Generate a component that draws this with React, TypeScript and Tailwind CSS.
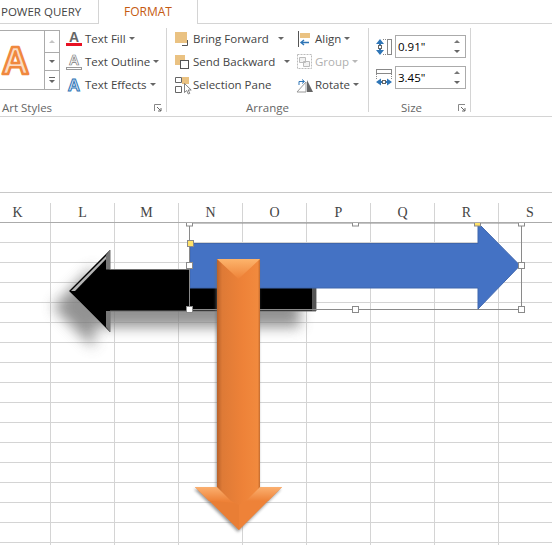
import type { ReactNode } from "react";

const COLUMNS = ["K", "L", "M", "N", "O", "P", "Q", "R", "S"];
const ROW_COUNT = 17;

function Caret({ muted = false }: { muted?: boolean }) {
	return (
		<svg width="6" height="3" viewBox="0 0 6 3" className="shrink-0">
			<path d="M0 0h6L3 3z" fill={muted ? "#b8b8b8" : "#666"} />
		</svg>
	);
}

function Launcher() {
	return (
		<svg width="8" height="8" viewBox="0 0 8 8" className="shrink-0">
			<path d="M.5 7V.5H7" fill="none" stroke="#888" />
			<path d="M3 3l4 4M7 4v3H4" fill="none" stroke="#666" />
		</svg>
	);
}

function RibbonItem({
	icon,
	label,
	caretGap,
	muted = false,
}: {
	icon: ReactNode;
	label: string;
	caretGap?: number;
	muted?: boolean;
}) {
	return (
		<div className="flex h-[23px] items-center">
			<div className="flex w-[19px] shrink-0 items-center">{icon}</div>
			<span className={muted ? "text-[#b0b0b0]" : "text-[#444]"}>{label}</span>
			{caretGap !== undefined && (
				<span className="flex" style={{ marginLeft: caretGap }}>
					<Caret muted={muted} />
				</span>
			)}
		</div>
	);
}

function Group({
	width,
	label,
	launcher = false,
	labelClass = "",
	children,
}: {
	width: string;
	label: string;
	launcher?: boolean;
	labelClass?: string;
	children: ReactNode;
}) {
	return (
		<div className={`flex h-[84px] shrink-0 flex-col border-r border-[#d4d4d4] ${width}`}>
			<div className="flex h-[77px]">{children}</div>
			<div className={`flex h-2 items-center leading-none text-[#666] ${labelClass}`}>
				<span>{label}</span>
				{launcher && (
					<span className="ml-auto flex pr-[4px]">
						<Launcher />
					</span>
				)}
			</div>
		</div>
	);
}

function Spinner({ value }: { value: string }) {
	return (
		<div className="flex h-[23px] w-[71px] items-center border border-[#ababab] bg-white pl-[2px] pr-[5px]">
			<span className="flex-1 text-black">{value}</span>
			<div className="flex flex-col gap-[7px]">
				<svg width="6" height="3" viewBox="0 0 6 3">
					<path d="M0 3h6L3 0z" fill="#777" />
				</svg>
				<Caret />
			</div>
		</div>
	);
}

function ArtStylesGallery() {
	return (
		<div className="mt-[2px] flex h-[60px] w-[60px] shrink-0 border-y border-r border-[#ababab]">
			<div className="flex flex-1 items-center">
				<svg width="32" height="36" viewBox="0 0 32 36" className="overflow-visible">
					<text
						x="15.500"
						y="32"
						textAnchor="middle"
						fontFamily="'Liberation Sans', sans-serif"
						fontWeight="700"
						fontSize="38"
						fill="#fbdcc4"
						stroke="#f0883e"
						strokeWidth="2.500"
						strokeLinejoin="round"
					>
						A
					</text>
				</svg>
			</div>
			<div className="flex w-[15px] flex-col border-l border-[#ababab]">
				<div className="flex h-[22px] items-center justify-center border-b border-[#ababab]">
					<svg width="6" height="3" viewBox="0 0 6 3">
						<path d="M0 3h6L3 0z" fill="#c4c4c4" />
					</svg>
				</div>
				<div className="flex h-[18px] items-center justify-center border-b border-[#ababab]">
					<Caret />
				</div>
				<div className="flex flex-1 flex-col items-center justify-center gap-[2px]">
					<div className="h-px w-[6px] bg-[#666]" />
					<Caret />
				</div>
			</div>
		</div>
	);
}

const textFillIcon = (
	<svg width="16" height="18" viewBox="0 0 16 18">
		<text x="8" y="12" textAnchor="middle" fontFamily="'Liberation Sans', sans-serif" fontWeight="700" fontSize="14" fill="#666">
			A
		</text>
		<rect x="0" y="13" width="16" height="3" fill="#e81123" />
	</svg>
);

const textOutlineIcon = (
	<svg width="16" height="18" viewBox="0 0 16 18">
		<text x="8" y="12" textAnchor="middle" fontFamily="'Liberation Sans', sans-serif" fontWeight="700" fontSize="14" fill="#fff" stroke="#777" strokeWidth=".7">
			A
		</text>
		<rect x=".5" y="14.500" width="15" height="2" fill="#fff" stroke="#999" />
	</svg>
);

const textEffectsIcon = (
	<svg width="16" height="18" viewBox="0 0 16 18">
		<text x="8" y="15" textAnchor="middle" fontFamily="'Liberation Sans', sans-serif" fontWeight="700" fontSize="17" fill="#dbe8f6" stroke="#2e75b6" strokeWidth="1">
			A
		</text>
	</svg>
);

const bringForwardIcon = (
	<svg width="16" height="16" viewBox="0 0 16 16">
		<rect x="1" y="1" width="12" height="11" fill="#eac282" />
		<path d="M13.500 9v5.500H8" fill="none" stroke="#555" />
	</svg>
);

const sendBackwardIcon = (
	<svg width="16" height="16" viewBox="0 0 16 16">
		<rect x="1" y="1" width="10" height="10" fill="#eac282" />
		<rect x="6.500" y="6.500" width="8" height="8" fill="#fff" stroke="#555" />
	</svg>
);

const selectionPaneIcon = (
	<svg width="18" height="20" viewBox="0 0 18 20">
		<path d="M1.500 2.500h6v5h-6zM1.500 11.500h6v6h-6z" fill="#fff" stroke="#666" />
		<rect x="8" y="2" width="7" height="7" fill="#eac282" />
		<path d="M10.500 8.500v9l2.200-2 1.600 3.500 1.500-.7-1.600-3.300h3z" fill="#fff" stroke="#666" strokeWidth=".8" />
	</svg>
);

const alignIcon = (
	<svg width="16" height="18" viewBox="0 0 16 18">
		<path d="M2.500 1v16" stroke="#555" />
		<rect x="4" y="3" width="10" height="5" fill="#eac282" />
		<path d="M13 12.500H5M8 10l-3 2.500L8 15" fill="none" stroke="#2e75b6" strokeWidth="1.400" />
	</svg>
);

const groupIcon = (
	<svg width="17" height="17" viewBox="0 0 17 17">
		<path d="M1.500 1.500h14v14h-14z" fill="none" stroke="#bbb" strokeDasharray="2 1" />
		<path d="M3.500 4.500h6v5h-6zM7.500 8.500h6v5h-6z" fill="#f2f2f2" stroke="#bbb" />
	</svg>
);

const rotateIcon = (
	<svg width="18" height="16" viewBox="0 0 18 16">
		<path d="M1 15L10 5v10z" fill="#fff" stroke="#999" />
		<path d="M11 3l6 12h-6z" fill="#666" />
		<path d="M3 8V4.500h5M6 2.500l2.500 2L6 6.500" fill="none" stroke="#2e75b6" />
	</svg>
);

const heightIcon = (
	<svg width="16" height="18" viewBox="0 0 16 18">
		<path d="M4 3v12" stroke="#2e75b6" strokeWidth="2" />
		<path d="M0 6l4-5 4 5zM0 12l4 5 4-5z" fill="#2e75b6" />
		<rect x="2.500" y="7.500" width="3" height="3" fill="#fff" stroke="#666" />
		<path d="M7 1.500h4" stroke="#888" strokeDasharray="1 1" />
		<path d="M7 16.500h4" stroke="#888" strokeDasharray="1 1" />
		<rect x="11.500" y="1.500" width="4" height="15" fill="#fff" stroke="#888" />
	</svg>
);

const widthIcon = (
	<svg width="17" height="18" viewBox="0 0 17 18">
		<rect x=".5" y=".5" width="15" height="4" fill="#fff" stroke="#888" />
		<path d="M.5 5v5M15.500 5v5" stroke="#888" strokeDasharray="1 1" />
		<path d="M3 13h10" stroke="#2e75b6" strokeWidth="2" />
		<path d="M5 9.500L0 13l5 3.500zM11 9.500l5 3.500-5 3.500z" fill="#2e75b6" />
		<rect x="6.500" y="11.500" width="3" height="3" fill="#fff" stroke="#666" />
	</svg>
);

function Ribbon() {
	return (
		<div className="font-['Open_Sans',sans-serif] text-[11.5px]">
			<div className="flex h-6 text-[#444]">
				<div className="flex w-[99px] items-center border-r border-b border-[#d4d4d4] pl-px">POWER QUERY</div>
				<div className="flex w-[99px] items-center justify-center border-r border-[#d4d4d4] text-[12px] text-[#c55a11]">FORMAT</div>
				<div className="flex-1 border-b border-[#d4d4d4]" />
			</div>
			<div className="flex h-[93px] items-start border-b border-[#d4d4d4] pt-1">
				<Group width="w-[167px]" label="Art Styles" launcher labelClass="pl-[2px]">
					<ArtStylesGallery />
					<div className="-mt-px pl-[6px]">
						<RibbonItem icon={textFillIcon} label="Text Fill" caretGap={3} />
						<RibbonItem icon={textOutlineIcon} label="Text Outline" caretGap={3} />
						<RibbonItem icon={textEffectsIcon} label="Text Effects" caretGap={3} />
					</div>
				</Group>
				<Group width="w-[202px]" label="Arrange" labelClass="justify-center">
					<div className="-mt-px w-[129px] pl-[7px]">
						<RibbonItem icon={bringForwardIcon} label="Bring Forward" caretGap={9} />
						<RibbonItem icon={sendBackwardIcon} label="Send Backward" caretGap={9} />
						<RibbonItem icon={selectionPaneIcon} label="Selection Pane" />
					</div>
					<div className="-mt-px">
						<RibbonItem icon={alignIcon} label="Align" caretGap={3} />
						<RibbonItem icon={groupIcon} label="Group" caretGap={3} muted />
						<RibbonItem icon={rotateIcon} label="Rotate" caretGap={3} />
					</div>
				</Group>
				<Group width="w-[102px]" label="Size" launcher labelClass="pl-[32px]">
					<div className="flex flex-col gap-2 pl-[7px] pt-[7px]">
						<div className="flex items-center gap-[3px]">
							{heightIcon}
							<Spinner value={'0.91"'} />
						</div>
						<div className="flex items-center gap-[2px]">
							{widthIcon}
							<Spinner value={'3.45"'} />
						</div>
					</div>
				</Group>
			</div>
		</div>
	);
}

function Handle({ x, y, yellow = false }: { x: number; y: number; yellow?: boolean }) {
	return <rect x={x - 3} y={y - 3} width="6" height="6" fill={yellow ? "#ffe26b" : "#fff"} stroke="#8a8a8a" />;
}

// page coordinates, hence the viewBox offset
function Shapes() {
	const black = "M69 291L110 250V269.500H316V311H110V332Z";
	const blue = "M190 243.500H478V223L520 265.500L478 309V288H190Z";
	const orange = "M217 259H260V487H282L239 530L195 487H217Z";
	return (
		<svg className="absolute inset-0 h-full w-full" viewBox="0 223 552 322">
			<defs>
				<filter id="soft" x="-20%" y="-40%" width="140%" height="180%">
					<feGaussianBlur stdDeviation="7" />
				</filter>
				<filter id="softOrange" x="-30%" y="-10%" width="160%" height="120%">
					<feGaussianBlur stdDeviation="1.500" />
				</filter>
				<linearGradient id="shaft" x1="0" x2="1" y1="0" y2="0">
					<stop offset="0" stopColor="#b9622a" />
					<stop offset=".12" stopColor="#de7a36" />
					<stop offset=".6" stopColor="#ee8238" />
					<stop offset=".95" stopColor="#f18a3e" />
					<stop offset="1" stopColor="#c06a2e" />
				</linearGradient>
				<linearGradient id="bevelTop" x1="0" x2="0" y1="0" y2="1">
					<stop offset="0" stopColor="#fdb46c" />
					<stop offset="1" stopColor="#ee8238" />
				</linearGradient>
				<linearGradient id="bevelHead" x1="0" x2="0" y1="0" y2="1">
					<stop offset="0" stopColor="#fbb070" />
					<stop offset="1" stopColor="#ee8238" />
				</linearGradient>
			</defs>

			<path d={black} fill="#777" opacity=".8" filter="url(#soft)" transform="translate(-16 16)" />
			<path d={black} fill="#000" stroke="#6e6e6e" strokeWidth="1" />
			<path d="M71 291L109 253V256L75 291Z" fill="#b5b5b5" />
			<path d="M110 250V269.500H106V255Z" fill="#777" />
			<path d="M110 332V311H106V327Z" fill="#777" />
			<path d="M312 270H316V311H312Z" fill="#555" />

			<path d={blue} fill="#4472c4" stroke="#3f66ad" strokeWidth="1" />

			<path d="M189.500 223H521.500V309.500H189.500Z" fill="none" stroke="#8a8a8a" />
			<Handle x={355.500} y={223} />
			<Handle x={189.500} y={223} />
			<Handle x={521.500} y={223} />
			<Handle x={477.500} y={223} yellow />
			<Handle x={190.500} y={243.500} yellow />
			<Handle x={189.500} y={265.500} />
			<Handle x={521.500} y={265.500} />
			<Handle x={189.500} y={309.500} />
			<Handle x={355.500} y={309.500} />
			<Handle x={521.500} y={309.500} />

			<path d={orange} fill="#6e6e6e" opacity=".7" filter="url(#softOrange)" transform="translate(-1 2)" />
			<path d="M195 487H282L239 530Z" fill="#ee8238" />
			<path d="M239 503V530L210 501Z" fill="#e97e35" />
			<path d="M195 487H218L232 501H209Z" fill="url(#bevelHead)" />
			<path d="M282 487H259L245 501H268Z" fill="url(#bevelHead)" />
			<path d="M217 259H260V487L246 501L239 505L231 501L217 487Z" fill="url(#shaft)" />
			<path d="M217 259H260L238.500 279Z" fill="url(#bevelTop)" />
		</svg>
	);
}

function Sheet() {
	return (
		<div className="border-t border-[#c8c8c8]">
			<div className="grid h-[30px] grid-cols-[51px_repeat(7,64px)_1fr] border-b border-[#ababab] font-['Liberation_Serif',serif] text-[14px] text-[#444]">
				{COLUMNS.map((name, i) => (
					<div key={name} className="flex items-end justify-center">
						<div className={`flex h-[19px] w-full items-center justify-center ${i < 8 ? "border-r border-[#d4d4d4]" : ""} ${i === 0 ? "pr-[15px]" : ""} ${i === 8 ? "pl-[9px]" : ""}`}>
							{name}
						</div>
					</div>
				))}
			</div>
			<div className="relative h-[322px] overflow-hidden">
				{Array.from({ length: ROW_COUNT }, (_, row) => (
					<div key={row} className="grid h-5 grid-cols-[51px_repeat(7,64px)_1fr]">
						{COLUMNS.map((name, i) => (
							<div key={name} className={`border-b border-[#d4d4d4] ${i < 8 ? "border-r" : ""}`} />
						))}
					</div>
				))}
				<Shapes />
			</div>
		</div>
	);
}

export default function App() {
	return (
		<div className="h-[545px] w-[552px] overflow-hidden bg-white">
			<Ribbon />
			<div className="h-[75px]" />
			<Sheet />
		</div>
	);
}
